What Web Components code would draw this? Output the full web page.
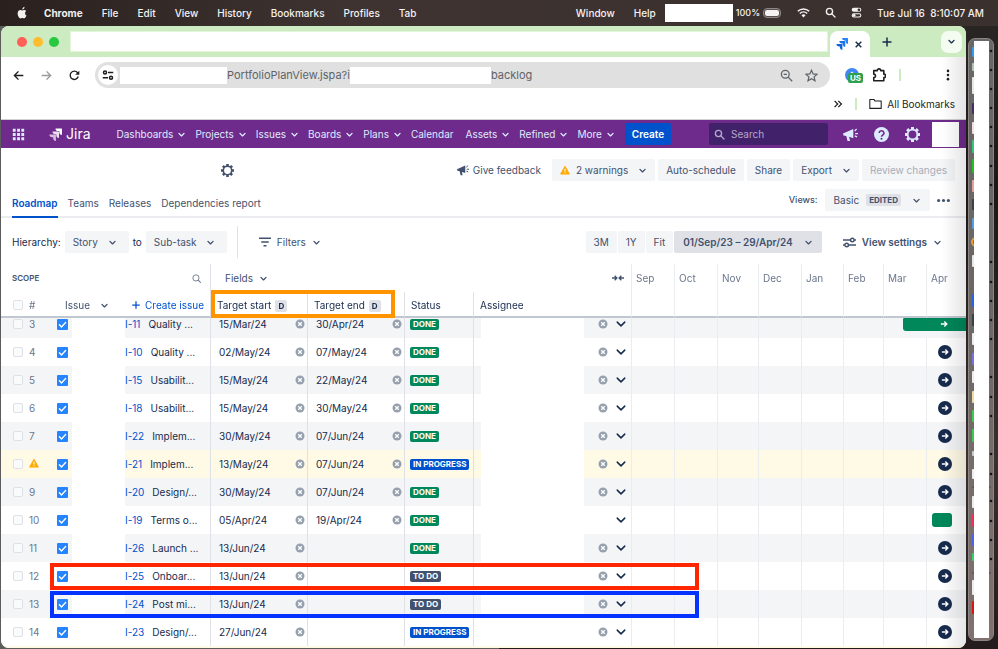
<!DOCTYPE html>
<html lang="en">
<head>
<meta charset="utf-8">
<title>Roadmap</title>
<style>
    html, body {
        height: 100%;
    }

    body {
        margin: 0;
        overflow: hidden;
        font-family: Inter, "Liberation Sans", sans-serif;
        font-size: 10px;
        line-height: 14px;
        color: #172b4d;
        --text-subtle: #42526e;
        --surface-sunken: #f4f5f7;
        --line: #dfe1e6;
        --link: #0052cc;
        --success: #00875a;
    }
</style>
</head>
<body>
<desktop-shell>
    <mac-menu-bar slot="menu"></mac-menu-bar>
    <browser-window>
        <jira-nav></jira-nav>
        <plan-header></plan-header>
        <plan-toolbar></plan-toolbar>
        <plan-table></plan-table>
    </browser-window>
    <app-dock slot="dock"></app-dock>
</desktop-shell>

<script>
// Icons, all of them on a 16x16 grid.
const ICONS = {
    apple: '<path fill="currentColor" d="M11.2 8.5c0-1.6 1.3-2.4 1.4-2.4-.8-1.100-2-1.300-2.400-1.300-1-.1-2 .6-2.500.6s-1.300-.6-2.100-.6C3.900 4.900 2 6.100 2 9.200 2 12 4 15.300 5.600 15.300c.8 0 1.100-.5 2.100-.5s1.300.5 2.100.5c1.500 0 2.700-2.300 3.200-3.500-1.200-.5-1.800-1.600-1.800-3.300zM9.700 3.500c.5-.6.8-1.400.8-2.500-.9.1-2.700 1-2.700 3.200.8 0 1.500-.2 1.900-.7z"/>',
    wifi: '<g fill="none" stroke="currentColor" stroke-width="2"><path d="M1 6.500a10 10 0 0 1 14 0M3.500 9.200a6.500 6.500 0 0 1 9 0"/></g><path fill="currentColor" d="M5.500 11.500a3.600 3.600 0 0 1 5 0L8 14z"/>',
    search: '<circle cx="6.500" cy="6.500" r="4.500" fill="none" stroke="currentColor" stroke-width="2"/><path d="M10 10l4.500 4.500" stroke="currentColor" stroke-width="2" stroke-linecap="round"/>',
    searchThin: '<circle cx="7" cy="7" r="5.500" fill="none" stroke="currentColor" stroke-width="1.600"/><path d="M11 11l4 4" stroke="currentColor" stroke-width="1.800" stroke-linecap="round"/>',
    zoomOut: '<circle cx="6.500" cy="6.500" r="4.800" fill="none" stroke="currentColor" stroke-width="1.600"/><path d="M10 10l5 5M4.500 6.500h4" stroke="currentColor" stroke-width="1.600"/>',
    control: '<rect x="1" y="1" width="14" height="6" rx="3" fill="currentColor"/><circle cx="11.500" cy="4" r="2" fill="#3a302d"/><rect x="1.700" y="9.700" width="12.600" height="4.800" rx="2.400" fill="none" stroke="currentColor" stroke-width="1.500"/><circle cx="4.500" cy="12" r="2" fill="currentColor"/>',
    chevron: '<path d="M3.500 6l4.500 4.500L12.500 6" fill="none" stroke="currentColor" stroke-width="2.400" stroke-linecap="round" stroke-linejoin="round"/>',
    chevronWide: '<path d="M2 5l6 6 6-6" fill="none" stroke="currentColor" stroke-width="2.400" stroke-linecap="round" stroke-linejoin="round"/>',
    close: '<path d="M3 3l10 10M13 3L3 13" stroke="currentColor" stroke-width="2.500"/>',
    plus: '<path d="M8 2v12M2 8h12" stroke="currentColor" stroke-width="2"/>',
    back: '<path d="M15 8H2M8 2L2 8l6 6" fill="none" stroke="currentColor" stroke-width="2"/>',
    forward: '<path d="M1 8h13M8 2l6 6-6 6" fill="none" stroke="currentColor" stroke-width="2"/>',
    reload: '<path d="M13.500 9.500A6 6 0 1 1 12.500 4L14 5.500" fill="none" stroke="currentColor" stroke-width="2"/><path d="M15 1v6H9z" fill="currentColor"/>',
    tune: '<g fill="none" stroke="currentColor" stroke-width="2"><circle cx="4" cy="4.500" r="2"/><path d="M8 4.500h7M1 11.500h7"/><circle cx="12" cy="11.500" r="2"/></g>',
    settings: '<g fill="none" stroke="currentColor" stroke-width="1.800"><path d="M0 5h9M14 5h2M0 11h2M7 11h9"/><circle cx="11.500" cy="5" r="2.200"/><circle cx="4.500" cy="11" r="2.200"/></g>',
    star: '<path d="M8 1.500l2 4.500 4.900.5-3.700 3.200 1.100 4.800L8 12l-4.300 2.500 1.100-4.800L1.100 6.500 6 6z" fill="none" stroke="currentColor" stroke-width="1.500"/>',
    puzzle: '<path d="M2 3h4a2 2 0 0 1 4 0h3.500v4a2 2 0 0 1 0 4v3.500H2V11a2 2 0 0 0 0-4z" fill="none" stroke="currentColor" stroke-width="1.800" stroke-linejoin="round"/>',
    kebab: '<g fill="currentColor"><circle cx="8" cy="2.500" r="1.700"/><circle cx="8" cy="8" r="1.700"/><circle cx="8" cy="13.500" r="1.700"/></g>',
    more: '<g fill="currentColor"><circle cx="2" cy="8" r="1.900"/><circle cx="8" cy="8" r="1.900"/><circle cx="14" cy="8" r="1.900"/></g>',
    double: '<path d="M2.500 3l5 5-5 5M8.500 3l5 5-5 5" fill="none" stroke="currentColor" stroke-width="2"/>',
    folder: '<path d="M1 3h5l1.500 2H15v9H1z" fill="none" stroke="currentColor" stroke-width="1.300" stroke-linejoin="round"/>',
    apps: '<g fill="currentColor"><path d="M1 1h3.500v3.500H1zM6.300 1h3.500v3.500H6.300zM11.500 1H15v3.500h-3.500zM1 6.300h3.500v3.500H1zM6.300 6.300h3.500v3.500H6.300zM11.500 6.300H15v3.500h-3.500zM1 11.500h3.500V15H1zM6.300 11.500h3.500V15H6.300zM11.500 11.500H15V15h-3.500z"/></g>',
    jira: '<g fill="currentColor"><path d="M15.500.500H8a3.400 3.400 0 0 0 3.300 3.300h1.400v1.300a3.400 3.400 0 0 0 3.300 3.300V1a.5.500 0 0 0-.5-.5z"/><path opacity=".85" d="M11.700 4.300H4.300a3.400 3.400 0 0 0 3.300 3.300H9V9a3.400 3.400 0 0 0 3.300 3.300V4.800a.5.500 0 0 0-.6-.5z"/><path opacity=".7" d="M8 8H.500a3.400 3.400 0 0 0 3.300 3.300h1.400v1.400A3.400 3.400 0 0 0 8.500 16V8.500A.5.500 0 0 0 8 8z"/></g>',
    jiraBlue: '<g><path fill="#2684ff" d="M15.500 0H8a3.400 3.400 0 0 0 3.300 3.300h1.400v1.400A3.400 3.400 0 0 0 16 8V.500a.5.500 0 0 0-.5-.5z"/><path fill="#1b74ee" d="M11.700 4H4.300a3.400 3.400 0 0 0 3.300 3.300H9v1.400A3.400 3.400 0 0 0 12.300 12V4.500a.5.500 0 0 0-.6-.5z"/><path fill="#0b62de" d="M8 8H.500a3.400 3.400 0 0 0 3.300 3.300h1.400v1.400A3.400 3.400 0 0 0 8.500 16V8.500A.5.500 0 0 0 8 8z"/></g>',
    megaphone: '<path d="M0 7L11 2v10L6.500 10.500l1 4.500H4.800L3.500 9.700.500 9z" fill="currentColor"/><path d="M12.500 4.500l2-2.500M13 7h3M12.500 9.500l2.500 1" stroke="currentColor" stroke-width="1.300"/>',
    help: '<circle cx="8" cy="8" r="8" fill="currentColor"/><path d="M5.500 6.500a2.500 2.500 0 1 1 3.700 2.200C8.300 9.200 8 9.500 8 10.500" fill="none" stroke="#6e2b8b" stroke-width="1.700"/><circle cx="8" cy="12.500" r="1.100" fill="#6e2b8b"/>',
    gear: '<circle cx="8" cy="8" r="5.200" fill="none" stroke="currentColor" stroke-width="2"/><g stroke="currentColor" stroke-width="3.200"><path d="M8 0v2.500M8 13.500V16M0 8h2.500M13.500 8H16M2.300 2.300l1.800 1.800M11.900 11.900l1.800 1.800M13.700 2.300l-1.800 1.800M4.100 11.900l-1.800 1.800"/></g>',
    warning: '<path d="M8 2l7 12.500H1z" fill="#ffab00" stroke="#ffab00" stroke-linejoin="round" stroke-width="1.500"/><path d="M8 6v4.200M8 11.500v1.700" stroke="#fff" stroke-width="1.700"/>',
    filter: '<path d="M0 3h16M3 8h10M6 13h4" stroke="currentColor" stroke-width="2"/>',
    collapse: '<path d="M0 8h6M3.500 5l3 3-3 3M16 8h-6M12.500 5l-3 3 3 3" fill="none" stroke="currentColor" stroke-width="1.800"/>',
    clear: '<circle cx="8" cy="8" r="7.200" fill="#97a0af"/><path d="M5.200 5.200l5.600 5.600M10.800 5.200l-5.600 5.600" stroke="#fff" stroke-width="2"/>',
    task: '<rect width="16" height="16" rx="1.500" fill="#2684ff"/><path d="M3.500 8.500l3 3 6-6.500" fill="none" stroke="#fff" stroke-width="2" stroke-linecap="round"/>',
    arrow: '<path d="M3 8h9M8.500 4l4 4-4 4" fill="none" stroke="currentColor" stroke-width="2.200"/>',
    translate: '<circle cx="8" cy="8" r="8" fill="#4285f4"/><path d="M4 9l4-4 4 4" stroke="#fff" stroke-width="1.500" fill="none"/>'
}

const ROWS = [
    { nb: '3', key: 'I-11', name: 'Quality ...', start: '15/Mar/24', end: '30/Apr/24', status: 'DONE', bar: 'long' },
    { nb: '4', key: 'I-10', name: 'Quality ...', start: '02/May/24', end: '07/May/24', status: 'DONE' },
    { nb: '5', key: 'I-15', name: 'Usabilit...', start: '15/May/24', end: '22/May/24', status: 'DONE' },
    { nb: '6', key: 'I-18', name: 'Usabilit...', start: '15/May/24', end: '30/May/24', status: 'DONE' },
    { nb: '7', key: 'I-22', name: 'Implem...', start: '30/May/24', end: '07/Jun/24', status: 'DONE' },
    { nb: '', key: 'I-21', name: 'Implem...', start: '13/May/24', end: '07/Jun/24', status: 'IN PROGRESS', warning: true },
    { nb: '9', key: 'I-20', name: 'Design/...', start: '30/May/24', end: '07/Jun/24', status: 'DONE' },
    { nb: '10', key: 'I-19', name: 'Terms o...', start: '05/Apr/24', end: '19/Apr/24', status: 'DONE', bar: 'short', unassigned: true },
    { nb: '11', key: 'I-26', name: 'Launch ...', start: '13/Jun/24', end: '', status: 'DONE' },
    { nb: '12', key: 'I-25', name: 'Onboar...', start: '13/Jun/24', end: '', status: 'TO DO' },
    { nb: '13', key: 'I-24', name: 'Post mi...', start: '13/Jun/24', end: '', status: 'TO DO' },
    { nb: '14', key: 'I-23', name: 'Design/...', start: '27/Jun/24', end: '', status: 'IN PROGRESS' }
]

const MONTHS = ['Sep', 'Oct', 'Nov', 'Dec', 'Jan', 'Feb', 'Mar', 'Apr']

/**
 * Attach an open shadow root and fill it.
 */
function render(element, html) {
    element.attachShadow({ mode: 'open' }).innerHTML = html
}

/**
 * An icon: <ui-icon name="chevron" size="8">
 */
class UiIcon extends HTMLElement {
    constructor() {
        super()
        this.attachShadow({ mode: 'open' })
    }

    connectedCallback() {
        let size = this.getAttribute('size') || 12
        this.shadowRoot.innerHTML = `
        <style>
            :host { display: inline-flex; flex: none; }
            svg { display: block; }
        </style>
        <svg width="${size}" height="${size}" viewBox="0 0 16 16" aria-hidden="true">${ICONS[this.getAttribute('name')]}</svg>`
    }
}
customElements.define('ui-icon', UiIcon)

/**
 * A button, with a chevron when it has the attribute "menu".
 */
class UiButton extends HTMLElement {
    constructor() {
        super()
        this.attachShadow({ mode: 'open' })
    }

    connectedCallback() {
        let menu = this.hasAttribute('menu')
        this.shadowRoot.innerHTML = `
        <style>
            :host { display: inline-flex; flex: none; }
            button {
                display: inline-flex;
                align-items: center;
                gap: var(--button-gap, 6px);
                height: 22px;
                padding: 0 var(--button-padding, 0);
                border: 0;
                border-radius: var(--button-radius, 2px);
                background: var(--button-background, none);
                color: inherit;
                font: inherit;
                font-weight: var(--button-weight, 400);
                white-space: nowrap;
            }
        </style>
        <button type="button" ${menu ? 'aria-haspopup="true"' : ''} ${this.hasAttribute('disabled') ? 'disabled' : ''}>
            <slot></slot>${menu ? '<ui-icon name="chevron" size="9"></ui-icon>' : ''}
        </button>`
        if (this.getAttribute('label')) {
            this.shadowRoot.querySelector('button').setAttribute('aria-label', this.getAttribute('label'))
        }
    }
}
customElements.define('ui-button', UiButton)

/**
 * A drop-down with a single visible value.
 */
class UiSelect extends HTMLElement {
    constructor() {
        super()
        this.attachShadow({ mode: 'open' })
    }

    connectedCallback() {
        this.shadowRoot.innerHTML = `
        <style>
            :host { display: inline-grid; align-items: center; }
            select, ui-icon { grid-area: 1 / 1; }
            select {
                appearance: none;
                height: 22px;
                padding: 0 30px 0 8px;
                border: 0;
                border-radius: 2px;
                background: var(--surface-sunken);
                color: var(--text-subtle);
                font: inherit;
            }
            ui-icon { justify-self: end; margin-right: 12px; pointer-events: none; color: var(--text-subtle); }
        </style>
        <select aria-label="${this.getAttribute('label')}"><option>${this.getAttribute('value')}</option></select>
        <ui-icon name="chevron" size="9"></ui-icon>`
    }
}
customElements.define('ui-select', UiSelect)

/**
 * The status of an issue.
 */
class StatusLozenge extends HTMLElement {
    constructor() {
        super()
        render(this, `
        <style>
            :host {
                display: inline-block;
                padding: 0 3px;
                border-radius: 2px;
                background: #42526e;
                color: #fff;
                font-size: 8px;
                font-weight: 700;
                line-height: 11px;
                white-space: nowrap;
            }
            :host([kind="DONE"]) { background: var(--success); }
            :host([kind="IN PROGRESS"]) { background: var(--link); }
        </style>
        <slot></slot>`)
    }
}
customElements.define('status-lozenge', StatusLozenge)

/**
 * The desktop: menu bar on top, the window and the dock under it.
 */
class DesktopShell extends HTMLElement {
    constructor() {
        super()
        render(this, `
        <style>
            :host {
                display: flex;
                flex-direction: column;
                height: 100vh;
                background: linear-gradient(#2b2725, #1c1818 30%, #3a302f 70%, #241c1c);
            }
            .desk {
                flex: 1;
                min-height: 0;
                display: grid;
                grid-template-columns: minmax(0, 1fr) 32px;
                grid-template-rows: minmax(0, 1fr);
                padding: 0 0 1px 1px;
                background: linear-gradient(90deg, #5c5c5c 50%, transparent 50%);
            }
        </style>
        <slot name="menu"></slot>
        <div class="desk">
            <slot></slot>
            <slot name="dock"></slot>
        </div>`)
    }
}
customElements.define('desktop-shell', DesktopShell)

/**
 * The menu bar of the system.
 */
class MacMenuBar extends HTMLElement {
    constructor() {
        super()
        render(this, `
        <style>
            :host {
                display: flex;
                align-items: center;
                height: 26px;
                box-sizing: border-box;
                padding: 0 14px 1px 16px;
                background: linear-gradient(90deg, #2a211f, #3e3331 35%, #3a302e);
                color: #f4f1f0;
                font-weight: 500;
                white-space: nowrap;
            }
            nav, .extras, .status { display: flex; align-items: center; }
            nav { gap: 19px; }
            nav ui-icon { margin-right: -4px; }
            b { font-weight: 700; }
            .extras { margin-left: auto; gap: 15px; }
            .status { gap: 3px; margin: 0 2px 0 -6px; font-size: 9px; }
            .blank { width: 68px; height: 18px; background: #fff; }
            .battery {
                width: 14px;
                height: 6px;
                margin-left: 1px;
                border: 1px solid #57504e;
                outline: 1px solid #8d8684;
                border-radius: 3px;
                background: #f4f1f0;
            }
        </style>
        <nav>
            <ui-icon name="apple" size="13"></ui-icon>
            <b>Chrome</b><span>File</span><span>Edit</span><span>View</span><span>History</span>
            <span>Bookmarks</span><span>Profiles</span><span>Tab</span>
        </nav>
        <div class="extras">
            <nav><span>Window</span><span>Help</span></nav>
            <div class="status"><div class="blank"></div><span>100%</span><div class="battery"></div></div>
            <ui-icon name="wifi" size="13"></ui-icon>
            <ui-icon name="search" size="11"></ui-icon>
            <ui-icon name="control" size="11"></ui-icon>
            <time>Tue Jul 16&nbsp; 8:10:07 AM</time>
        </div>`)
    }
}
customElements.define('mac-menu-bar', MacMenuBar)

/**
 * The dock, on the right edge of the desktop.
 */
class AppDock extends HTMLElement {
    constructor() {
        super()

        // [top, height, color] of each application.
        let apps = [
            [8, 10, '#2e9df0'], [24, 8, '#a9c9b5'], [38, 17, '#e8e8e8'], [64, 11, '#4b2c5e'], [83, 12, '#f2dede'],
            [101, 13, '#34c77b'], [120, 14, '#1ec31e'], [141, 12, '#e9a09a'], [160, 11, '#3b4043'], [179, 11, '#5a9be6'],
            [216, 12, '#e8e8e8'], [255, 13, '#2664e0'], [275, 12, '#3b4043'], [294, 12, '#eee'], [314, 12, '#7472e8'],
            [332, 12, '#eee'], [352, 12, '#f1dda0'], [371, 12, '#3ecb4d'], [390, 13, '#3ecb4d'], [412, 5, '#ccc'],
            [430, 10, '#eee'], [457, 12, '#eee'], [475, 13, '#ef3054'], [495, 12, '#4f63e8'], [514, 8, '#30d468'],
            [541, 15, '#eee'], [562, 13, '#d91414']
        ]
        let dots = [12, 31, 50, 69, 88, 107, 127, 146, 165, 223, 243, 262, 281, 300, 338, 358, 377, 415, 435, 462, 482, 501, 520]

        render(this, `
        <style>
            :host {
                display: block;
                box-sizing: border-box;
                height: 603px;
                margin: 12px 4px 0 2px;
                border: 1px solid #8b8583;
                border-radius: 7px;
                background: linear-gradient(#686868, #6b6765 40%, #81716f);
                overflow: hidden;
            }
            svg { display: block; }
        </style>
        <svg width="24" height="601" aria-hidden="true">
            ${apps.map(a => `<rect x="3" y="${a[0]}" width="4" height="${a[1]}" rx="1" fill="${a[2]}"/>`).join('')}
            <circle cx="7" cy="203" r="4" fill="none" stroke="#f09a37" stroke-width="2"/>
            <path d="M3 448h19M3 534h19" stroke="#4c4545"/>
            <rect x="5" y="2" width="15" height="597" fill="#fff"/>
            ${dots.map(y => `<circle cx="22" cy="${y}" r="1.300" fill="#141414"/>`).join('')}
        </svg>`)
    }
}
customElements.define('app-dock', AppDock)

/**
 * The browser window: tab strip, address bar and bookmarks, then the page.
 */
class BrowserWindow extends HTMLElement {
    constructor() {
        super()
        render(this, `
        <style>
            :host {
                display: flex;
                flex-direction: column;
                position: relative;
                min-width: 0;
                border-radius: 8px;
                background: #fff;
                overflow: hidden;
            }
            /* shade cast along the right edge */
            :host::after {
                content: "";
                position: absolute;
                inset: 31px 0 0 auto;
                width: 24px;
                background: linear-gradient(90deg, transparent, rgba(0, 0, 0, .1));
                pointer-events: none;
                z-index: 5;
            }
            .strip {
                display: flex;
                align-items: center;
                height: 31px;
                padding: 0 4px 0 16px;
                background: #cdebc0;
            }
            .light { width: 10px; height: 10px; margin-right: 6px; border-radius: 50%; background: #ff5f57; }
            .light:nth-child(2) { background: #febc2e; }
            .light:nth-child(3) { background: #28c840; margin-right: 11px; }
            .tabs { flex: 1; height: 19px; border: 1px solid #e3f6da; background: #fff; }
            .tab {
                display: flex;
                align-items: center;
                align-self: end;
                gap: 6px;
                height: 26px;
                margin: 0 11px 0 2px;
                padding: 0 7px 0 6px;
                box-sizing: border-box;
                border-radius: 8px 8px 0 0;
                background: #fff;
            }
            .all-tabs { margin-left: 48px; --button-background: #f4fbf1; --button-padding: 6px; --button-radius: 7px; }
            .bar {
                display: flex;
                align-items: center;
                height: 36px;
                padding: 0 12px;
                gap: 17px;
                color: #1f1f1f;
            }
            .dim { color: #9a9a9a; }
            .omnibox {
                flex: 1;
                display: flex;
                align-items: center;
                height: 26px;
                margin: 0 -2px;
                padding: 0 12px 0 3px;
                box-sizing: border-box;
                border-radius: 13px;
                background: #e0e0e0;
                color: #5f6368;
                font-size: 11px;
            }
            .site {
                display: flex;
                align-items: center;
                justify-content: center;
                width: 20px;
                height: 20px;
                margin-right: 2px;
                border-radius: 50%;
                background: #fff;
                color: #1f1f1f;
            }
            .blank { width: 107px; height: 17px; background: #fff; }
            .blank.wide { width: 141px; }
            input {
                field-sizing: content;
                padding: 0;
                border: 0;
                background: none;
                color: inherit;
                font: inherit;
            }
            .end { margin-left: auto; margin-right: 12px; }
            .extensions { display: flex; align-items: center; gap: 13px; }
            .extension { position: relative; display: flex; }
            .extension b {
                position: absolute;
                left: 3px;
                top: 5px;
                padding: 0 2px;
                border-radius: 2px;
                background: #2f9e4f;
                color: #fff;
                font-size: 8px;
                line-height: 10px;
            }
            .rule { width: 2px; height: 12px; background: #cdebc0; }
            .kebab { margin-left: 24px; }
            .bookmarks {
                display: flex;
                align-items: center;
                justify-content: flex-end;
                gap: 12px;
                height: 27px;
                box-sizing: border-box;
                padding: 0 11px 5px;
                border-bottom: 1px solid #d0d0d0;
                color: #1f1f1f;
            }
            .bookmarks ui-button { --button-gap: 5px; }
            .page { flex: 1; min-height: 0; display: flex; flex-direction: column; }
        </style>
        <div class="strip">
            <span class="light"></span><span class="light"></span><span class="light"></span>
            <div class="tabs"></div>
            <div class="tab">
                <ui-icon name="jiraBlue" size="12"></ui-icon>
                <ui-button label="Close tab"><ui-icon name="close" size="9"></ui-icon></ui-button>
            </div>
            <ui-button label="New tab"><ui-icon name="plus" size="12"></ui-icon></ui-button>
            <ui-button class="all-tabs" label="Search tabs"><ui-icon name="chevron" size="9"></ui-icon></ui-button>
        </div>
        <div class="bar">
            <ui-button label="Back"><ui-icon name="back" size="11"></ui-icon></ui-button>
            <ui-button label="Forward" class="dim"><ui-icon name="forward" size="11"></ui-icon></ui-button>
            <ui-button label="Reload"><ui-icon name="reload" size="11"></ui-icon></ui-button>
            <div class="omnibox">
                <span class="site"><ui-icon name="tune" size="12"></ui-icon></span>
                <span class="blank"></span>
                <input aria-label="Address" value="PortfolioPlanView.jspa?i">
                <span class="blank wide"></span>
                <span>backlog</span>
                <ui-icon class="end" name="zoomOut" size="13"></ui-icon>
                <ui-icon name="star" size="13"></ui-icon>
            </div>
            <div class="extensions">
                <span class="extension"><ui-icon name="translate" size="14"></ui-icon><b>US</b></span>
                <ui-icon name="puzzle" size="14"></ui-icon>
                <span class="rule"></span>
            </div>
            <ui-button label="Menu" class="kebab"><ui-icon name="kebab" size="12"></ui-icon></ui-button>
        </div>
        <div class="bookmarks">
            <ui-icon name="double" size="10"></ui-icon>
            <span class="rule"></span>
            <ui-button><ui-icon name="folder" size="13"></ui-icon>All Bookmarks</ui-button>
        </div>
        <div class="page"><slot></slot></div>`)
    }
}
customElements.define('browser-window', BrowserWindow)

/**
 * Main navigation of the site.
 */
class JiraNav extends HTMLElement {
    constructor() {
        super()
        render(this, `
        <style>
            :host {
                display: flex;
                align-items: center;
                flex: none;
                height: 28px;
                box-sizing: border-box;
                padding: 0 7px 0 11px;
                background: #6e2b8b;
                color: #deebff;
            }
            .logo { display: flex; align-items: center; gap: 4px; margin: 0 26px 0 24px; font-size: 14px; color: #fff; }
            nav { display: flex; gap: 9px; --button-gap: 4px; }
            .calendar { margin-right: 3px; }
            .create { margin-left: 10px; --button-background: #0052cc; --button-padding: 7px; --button-weight: 600; color: #fff; }
            label {
                display: flex;
                align-items: center;
                gap: 6px;
                width: 119px;
                height: 22px;
                margin: 0 15px 0 auto;
                padding: 0 5px;
                box-sizing: border-box;
                border-radius: 2px;
                background: #42216b;
                color: #b3a8cc;
            }
            input { width: 100%; min-width: 0; padding: 0; border: 0; background: none; color: inherit; font: inherit; }
            input::placeholder { color: inherit; }
            .tools { display: flex; gap: 16px; margin-right: 12px; }
            .avatar { width: 27px; height: 25px; background: #fff; }
        </style>
        <ui-button label="Apps"><ui-icon name="apps" size="13"></ui-icon></ui-button>
        <span class="logo"><ui-icon name="jira" size="13"></ui-icon>Jira</span>
        <nav>
            <ui-button menu>Dashboards</ui-button>
            <ui-button menu>Projects</ui-button>
            <ui-button menu>Issues</ui-button>
            <ui-button menu>Boards</ui-button>
            <ui-button menu>Plans</ui-button>
            <ui-button class="calendar">Calendar</ui-button>
            <ui-button menu>Assets</ui-button>
            <ui-button menu>Refined</ui-button>
            <ui-button menu>More</ui-button>
        </nav>
        <ui-button class="create">Create</ui-button>
        <label><ui-icon name="search" size="11"></ui-icon><input type="search" placeholder="Search" aria-label="Search"></label>
        <div class="tools">
            <ui-button label="News"><ui-icon name="megaphone" size="15"></ui-icon></ui-button>
            <ui-button label="Help"><ui-icon name="help" size="15"></ui-icon></ui-button>
            <ui-button label="Settings"><ui-icon name="gear" size="15"></ui-icon></ui-button>
        </div>
        <div class="avatar"></div>`)
    }
}
customElements.define('jira-nav', JiraNav)

/**
 * Actions on the plan, its tabs and its views.
 */
class PlanHeader extends HTMLElement {
    constructor() {
        super()
        render(this, `
        <style>
            :host { display: block; flex: none; color: var(--text-subtle); border-bottom: 2px solid #ebecf0; }
            .actions, .views { display: flex; align-items: center; }
            .actions { gap: 3px; padding: 11px 11px 0 220px; }
            .views { align-items: flex-end; padding: 0 16px 0 11px; }
            .filled { --button-background: var(--surface-sunken); --button-padding: 8px; }
            .menu { --button-padding: 8px; --button-gap: 10px; --button-background: var(--surface-sunken); }
            .feedback { margin: 0 8px 0 auto; --button-gap: 4px; }
            .off { color: #a5adba; }
            .warn { display: inline-flex; align-items: center; gap: 6px; }
            nav { display: flex; gap: 10px; margin: 0 auto -2px 0; }
            a { padding: 2px 0 6px; border-bottom: 2px solid transparent; color: inherit; text-decoration: none; }
            a[aria-current] { color: var(--link); border-color: var(--link); font-weight: 600; }
            .select-view { display: flex; align-items: center; gap: 7px; padding: 8px 0 5px; font-size: 9px; font-weight: 500; }
            .select-view ui-button { font-size: 10px; }
            .select-view .menu { --button-padding: 9px; --button-gap: 11px; }
            .edited { margin-left: -4px; padding: 0 3px; border-radius: 2px; background: var(--line); font-size: 8px; font-weight: 700; line-height: 12px; }
        </style>
        <div class="actions">
            <ui-button label="Plan settings"><ui-icon name="gear" size="13"></ui-icon></ui-button>
            <ui-button class="feedback"><ui-icon name="megaphone" size="12"></ui-icon>Give feedback</ui-button>
            <ui-button menu class="menu"><span class="warn"><ui-icon name="warning" size="10"></ui-icon>2 warnings</span></ui-button>
            <ui-button class="filled">Auto-schedule</ui-button>
            <ui-button class="filled">Share</ui-button>
            <ui-button menu class="menu">Export</ui-button>
            <ui-button disabled class="filled off">Review changes</ui-button>
        </div>
        <div class="views">
            <nav>
                <a href="#roadmap" aria-current="page">Roadmap</a>
                <a href="#teams">Teams</a>
                <a href="#releases">Releases</a>
                <a href="#dependencies">Dependencies report</a>
            </nav>
            <div class="select-view">
                <span>Views:</span>
                <ui-button menu class="menu">Basic <span class="edited">EDITED</span></ui-button>
                <ui-button label="More"><ui-icon name="more" size="13"></ui-icon></ui-button>
            </div>
        </div>`)
    }
}
customElements.define('plan-header', PlanHeader)

/**
 * Hierarchy, filters and time range.
 */
class PlanToolbar extends HTMLElement {
    constructor() {
        super()
        render(this, `
        <style>
            :host {
                display: flex;
                align-items: center;
                flex: none;
                gap: 4px;
                height: 46px;
                padding: 2px 24px 0 11px;
                box-sizing: border-box;
                color: var(--text-subtle);
                line-height: 22px;
            }
            .first { color: #172b4d; }
            .rule { width: 1px; height: 32px; margin: 0 17px 0 6px; background: var(--line); }
            .range {
                display: flex;
                gap: 1px;
                margin-left: auto;
                --button-background: var(--surface-sunken);
                --button-padding: 8px;
            }
            .range .on { --button-background: var(--line); --button-padding: 9px; --button-weight: 600; --button-gap: 11px; }
            .settings { margin-left: 17px; --button-weight: 600; }
        </style>
        <span class="first">Hierarchy:</span>
        <ui-select label="From level" value="Story"></ui-select>
        <span class="first">to</span>
        <ui-select label="To level" value="Sub-task"></ui-select>
        <span class="rule"></span>
        <ui-button menu><ui-icon name="filter" size="12"></ui-icon>Filters</ui-button>
        <div class="range">
            <ui-button>3M</ui-button><ui-button>1Y</ui-button><ui-button>Fit</ui-button>
            <ui-button menu class="on">01/Sep/23 – 29/Apr/24</ui-button>
        </div>
        <ui-button menu class="settings"><ui-icon name="settings" size="13"></ui-icon>View settings</ui-button>`)
    }
}
customElements.define('plan-toolbar', PlanToolbar)

/**
 * The issues of the plan with their fields and their place on the timeline.
 */
class PlanTable extends HTMLElement {
    constructor() {
        super()
        render(this, `
        <style>
            :host { display: block; flex: 1; min-height: 0; overflow: hidden; }
            .canvas { position: relative; }
            table { width: 100%; table-layout: fixed; border-collapse: separate; border-spacing: 0; }
            th, td {
                box-sizing: border-box;
                height: 28px;
                padding: 0;
                border-left: 1px solid var(--line);
                text-align: left;
                white-space: nowrap;
            }
            th:first-child, td:first-child { border-left: 0; }
            thead { position: sticky; top: 0; z-index: 2; }
            th { background: #fff; font-weight: 400; }
            thead tr:last-child th { height: 26px; padding: 2px 0 0 6px; border-bottom: 2px solid #c1c7d0; }
            thead tr:last-child th:first-child { padding-left: 0; }
            th.month { padding-left: 4px; border-left-color: #ebecf0; color: #6b778c; vertical-align: middle; }
            td.month { border-left-color: #ebecf0; }

            tbody tr:nth-child(odd) { background: var(--surface-sunken); }
            tbody tr:nth-child(even) { background: #fff; }
            tbody tr.warning { background: #fffae6; }

            .line { display: flex; align-items: center; height: 28px; }
            thead tr:last-child .line { height: 22px; }
            .scope-title { justify-content: space-between; padding: 0 9px 0 11px; font-size: 8px; font-weight: 600; color: var(--text-subtle); }
            .scope-title ui-icon { color: #6b778c; }
            .fields { justify-content: space-between; padding: 0 7px 0 14px; color: var(--text-subtle); }
            input {
                appearance: none;
                flex: none;
                width: 10px;
                height: 10px;
                margin: 0 6px 0 12px;
                border: 1px solid var(--line);
                border-radius: 2px;
                background: #fafbfc;
            }
            .nb { width: 28px; color: #6b778c; }
            .issue { margin: 0 auto 0 8px; color: var(--text-subtle); --button-gap: 10px; }
            .create { margin-right: 6px; color: var(--link); --button-gap: 4px; }
            .blank { flex: none; align-self: stretch; width: 53px; margin-left: 4px; background: #fff; }
            a { margin-right: 8px; color: var(--link); text-decoration: none; }
            .date { justify-content: space-between; padding: 0 2px 0 8px; }
            .status { padding-left: 5px; }
            .assignee { gap: 8px; padding-right: 5px; }
            .assignee .blank { width: 103px; margin: 0 auto 0 7px; }
            .d { display: inline-block; margin-left: 4px; padding: 0 3px; border-radius: 2px; background: var(--line); font-size: 8px; font-weight: 700; line-height: 12px; }
            .bar {
                display: flex;
                align-items: center;
                height: 14px;
                box-sizing: border-box;
                border-radius: 3px;
                background: var(--success);
                color: #fff;
            }
            .bar.long { margin-left: 19px; padding-left: 36px; border-radius: 3px 0 0 3px; }
            .bar.short { width: 20px; margin-left: 5px; }
            .later {
                display: flex;
                align-items: center;
                justify-content: center;
                width: 14px;
                height: 14px;
                margin-left: 11px;
                border-radius: 50%;
                background: #172b4d;
                color: #fff;
            }

            /* frames drawn over the table */
            .frame { position: absolute; box-sizing: border-box; border: 4px solid #ff2600; z-index: 3; pointer-events: none; }
            .frame.red { left: 49px; top: 307px; width: 649px; height: 27px; }
            .frame.blue { left: 49px; top: 335px; width: 649px; height: 27px; border-color: #0433ff; }
            .frame.orange { left: 210px; top: 34px; width: 184px; height: 28px; border-color: #ff9300; }
        </style>
        <div class="canvas">
            <table>
                <colgroup>
                    <col style="width: 209px"><col style="width: 97px"><col style="width: 97px">
                    <col style="width: 69px"><col style="width: 158px">
                    <col style="width: 43px"><col style="width: 43px"><col style="width: 41px"><col style="width: 43px">
                    <col style="width: 42px"><col style="width: 40px"><col style="width: 43px"><col>
                </colgroup>
                <thead>
                    <tr>
                        <th><div class="line scope-title">SCOPE<ui-icon name="searchThin" size="9"></ui-icon></div></th>
                        <th colspan="4"><div class="line fields"><ui-button menu>Fields</ui-button><ui-icon name="collapse" size="12"></ui-icon></div></th>
                        ${MONTHS.map(m => `<th class="month">${m}</th>`).join('')}
                    </tr>
                    <tr>
                        <th>
                            <div class="line">
                                <input type="checkbox" aria-label="Select all"><span class="nb">#</span>
                                <ui-button menu class="issue">Issue</ui-button>
                                <ui-button class="create"><ui-icon name="plus" size="10"></ui-icon>Create issue</ui-button>
                            </div>
                        </th>
                        <th>Target start<span class="d">D</span></th>
                        <th>Target end<span class="d">D</span></th>
                        <th>Status</th>
                        <th>Assignee</th>
                        ${MONTHS.map(() => '<th class="month"></th>').join('')}
                    </tr>
                </thead>
                <tbody>
                    ${ROWS.map(row => this.issueRow(row)).join('')}
                    <tr class="warning"><td colspan="13"></td></tr>
                </tbody>
            </table>
            <div class="frame orange"></div>
            <div class="frame red"></div>
            <div class="frame blue"></div>
        </div>`)
    }

    connectedCallback() {
        // The list is scrolled a little under its header.
        this.scrollTop = 8
    }

    /**
     * One issue.
     */
    issueRow(row) {
        let clear = '<ui-icon name="clear" size="10"></ui-icon>'
        return `
        <tr class="${row.warning ? 'warning' : ''}">
            <td>
                <div class="line">
                    <input type="checkbox" aria-label="Select ${row.key}">
                    <span class="nb">${row.warning ? '<ui-icon name="warning" size="10"></ui-icon>' : row.nb}</span>
                    <ui-icon name="task" size="11"></ui-icon>
                    <span class="blank"></span>
                    <a href="#${row.key}">${row.key}</a><span>${row.name}</span>
                </div>
            </td>
            <td><div class="line date">${row.start}${row.start && clear}</div></td>
            <td><div class="line date">${row.end}${row.end && clear}</div></td>
            <td><div class="line status"><status-lozenge kind="${row.status}">${row.status}</status-lozenge></div></td>
            <td>
                <div class="line assignee">
                    <span class="blank"></span>${row.unassigned ? '' : clear}
                    <ui-icon name="chevronWide" size="10"></ui-icon>
                </div>
            </td>
            ${this.timeline(row)}
        </tr>`
    }

    /**
     * The cells of the months, with the bar of the issue.
     */
    timeline(row) {
        let empty = '<td class="month"></td>'
        if (row.bar == 'long') {
            return empty.repeat(6) + '<td class="month" colspan="2"><div class="bar long"><ui-icon name="arrow" size="10"></ui-icon></div></td>'
        }
        if (row.bar == 'short') {
            return empty.repeat(7) + '<td class="month"><div class="bar short"></div></td>'
        }
        return empty.repeat(7) + '<td class="month"><span class="later"><ui-icon name="arrow" size="10"></ui-icon></span></td>'
    }
}
customElements.define('plan-table', PlanTable)
</script>
</body>
</html>
